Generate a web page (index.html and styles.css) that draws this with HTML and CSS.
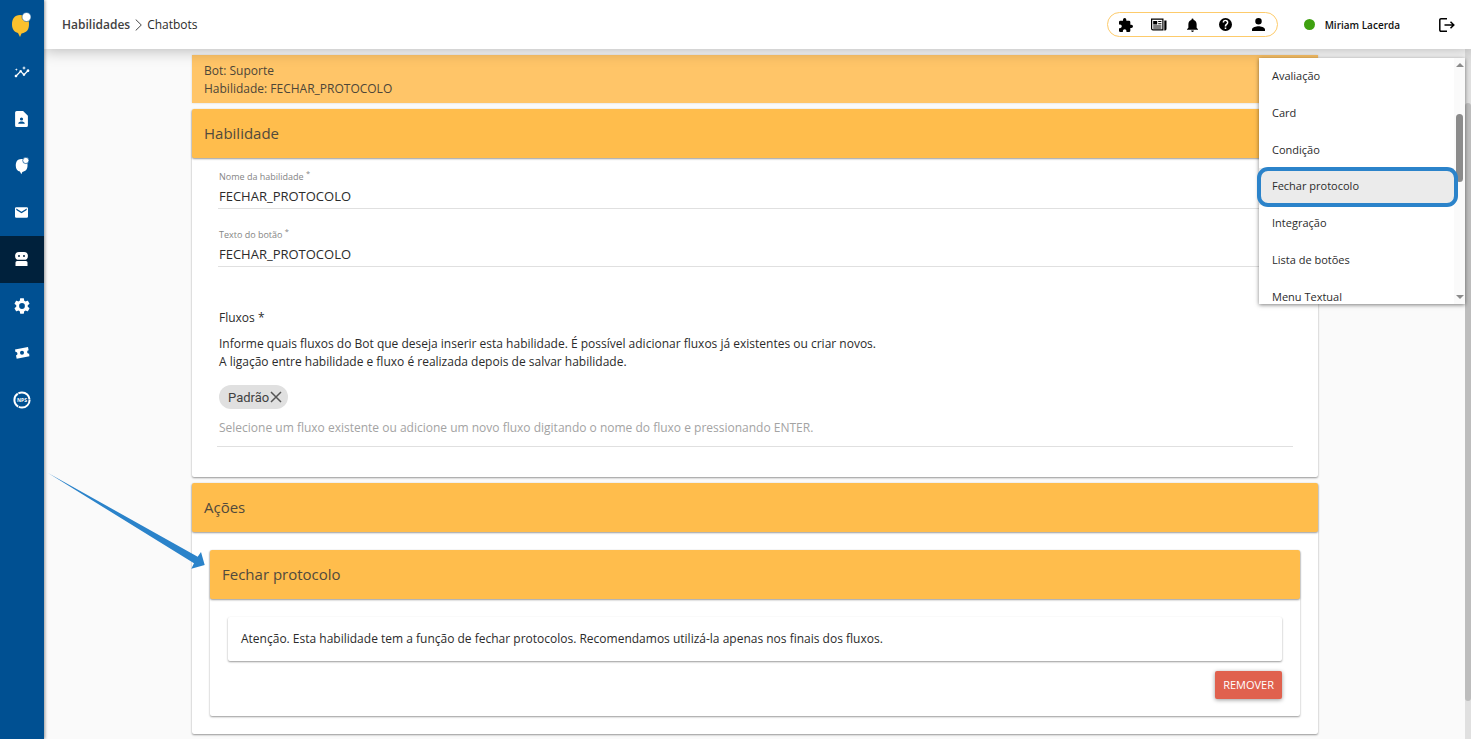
FILE: index.html
```html
<!DOCTYPE html>
<html lang="pt-BR">
<head>
<meta charset="utf-8">
<title>Habilidades - Chatbots</title>
<link rel="stylesheet" href="styles.css">
</head>
<body>
<div class="app">
  <aside class="sidebar">
    <a class="logo" href="#" aria-label="Início">
      <svg width="20" height="26" viewBox="0 0 20 26"><path d="M9 3C3.500 3 1 7 1 12.500c0 5 2.500 7.500 6 8.500l2 4 1.500-3.500C16 20.500 18 17.500 18 12 18 6 15 3 9 3z" fill="#fbc02d"/><circle cx="15.500" cy="5" r="4.500" fill="#fff" stroke="#005092" stroke-width=".6"/></svg>
    </a>
    <nav class="side-nav">
      <a href="#" aria-label="Métricas"><svg viewBox="0 0 24 24" width="16" height="16"><path d="M21 8c-1.450 0-2.260 1.440-1.930 2.510l-3.550 3.560c-.3-.09-.74-.09-1.040 0l-2.550-2.550C12.270 10.450 11.460 9 10 9c-1.450 0-2.270 1.440-1.930 2.520l-4.560 4.550C2.440 15.740 1 16.550 1 18c0 1.100.9 2 2 2 1.450 0 2.260-1.440 1.930-2.510l4.550-4.560c.3.090.74.090 1.040 0l2.550 2.550C12.730 16.550 13.540 18 15 18c1.450 0 2.270-1.440 1.930-2.520l3.560-3.550C21.560 12.260 23 11.450 23 10c0-1.100-.9-2-2-2zM15 9l.94-2.070L18 6l-2.060-.93L15 3l-.92 2.070L12 6l2.080.93zM3.500 11L4 9l2-.5L4 8l-.5-2L3 8l-2 .5L3 9z"/></svg></a>
      <a href="#" aria-label="Contatos"><svg viewBox="4 2 16 20" width="13" height="16"><path d="M14 2H6a2 2 0 0 0-2 2v16a2 2 0 0 0 2 2h12a2 2 0 0 0 2-2V8zM12 10a2 2 0 1 1 0 4 2 2 0 0 1 0-4zm4 8H8v-.6c0-1.600 2.600-2.400 4-2.400s4 .8 4 2.400z"/></svg></a>
      <a href="#" aria-label="Atendimento"><svg viewBox="0 0 20 26" width="14" height="18"><path d="M9 3C3.500 3 1 7 1 12.500c0 5 2.500 7.500 6 8.500l2 4 1.500-3.500C16 20.500 18 17.500 18 12 18 6 15 3 9 3z"/><circle cx="15.500" cy="5" r="4.500" stroke="#005092"/></svg></a>
      <a href="#" aria-label="Mensagens"><svg viewBox="2 4 20 16" width="13" height="11"><path d="M20 4H4a2 2 0 0 0-2 2v12a2 2 0 0 0 2 2h16a2 2 0 0 0 2-2V6a2 2 0 0 0-2-2zm0 4l-8 5-8-5V6l8 5 8-5z"/></svg></a>
      <a class="active" href="#" aria-label="Chatbots"><svg viewBox="0 0 13 14" width="13" height="14"><path fill-rule="evenodd" d="M4 0h5a3.700 3.700 0 0 1 0 7.800H4A3.700 3.700 0 0 1 4 0zM4 3a1 1 0 1 0 0 2 1 1 0 0 0 0-2zm5 0a1 1 0 1 0 0 2 1 1 0 0 0 0-2zM2 9h9a1.500 1.500 0 0 1 1.500 1.500V14H.5v-3.500A1.500 1.500 0 0 1 2 9z"/></svg></a>
      <a href="#" aria-label="Configurações"><svg viewBox="2 2 20 20" width="16" height="16"><path d="M19.140 12.940c.04-.3.060-.61.060-.94 0-.32-.02-.64-.07-.94l2.030-1.580c.18-.14.230-.41.120-.61l-1.920-3.320c-.12-.22-.37-.29-.59-.22l-2.390.96c-.5-.38-1.030-.7-1.620-.94l-.36-2.540c-.04-.24-.24-.41-.48-.41h-3.840c-.24 0-.43.17-.47.41l-.36 2.540c-.59.240-1.130.570-1.620.94l-2.390-.96c-.22-.08-.47 0-.59.220L2.740 8.870c-.12.210-.08.470.120.610l2.030 1.580c-.05.3-.09.630-.09.94s.02.640.070.940l-2.030 1.580c-.18.140-.23.410-.12.610l1.920 3.320c.12.220.370.290.590.220l2.390-.96c.5.380 1.030.7 1.620.94l.36 2.540c.05.240.240.410.480.410h3.840c.24 0 .44-.17.470-.41l.36-2.540c.59-.24 1.130-.56 1.620-.94l2.390.96c.22.080.470 0 .59-.22l1.920-3.320c.12-.22.070-.47-.12-.61zM12 15.600A3.600 3.600 0 1 1 12 8.400a3.600 3.600 0 0 1 0 7.200z"/></svg></a>
      <a href="#" aria-label="Campanhas"><svg viewBox="0 0 16 14" width="16" height="14"><path fill-rule="evenodd" d="M1 3.500L14 1l.6 3.200a1.700 1.700 0 0 0 .5 3.400l.3 2.700L2.700 12.700 2 9.400A1.700 1.700 0 0 0 1.500 6zM8 4.800a2 2 0 1 0 0 4 2 2 0 0 0 0-4z"/></svg></a>
      <a href="#" aria-label="NPS"><svg viewBox="0 0 18 18" width="18" height="18"><circle cx="9" cy="9" r="7.600" fill="none" stroke="#fff" stroke-width="2" stroke-dasharray="15.200 .7"/><text class="nps" x="9" y="11" text-anchor="middle">NPS</text></svg></a>
    </nav>
  </aside>

  <header class="topbar">
    <nav class="crumbs" aria-label="Navegação">
      <a class="crumb-root" href="#">Habilidades</a>
      <svg width="7" height="12" viewBox="0 0 7 12"><path d="M.7.500L6.300 6 .7 11.500" fill="none" stroke="#444"/></svg>
      <a href="#">Chatbots</a>
    </nav>
    <div class="tools">
      <button aria-label="Extensões"><svg viewBox="2 1 21 21" width="14" height="14"><path d="M20.500 11H19V7a2 2 0 0 0-2-2h-4V3.500a2.500 2.500 0 0 0-5 0V5H4a2 2 0 0 0-2 2v3.800h1.500a2.700 2.700 0 0 1 0 5.400H2V20a2 2 0 0 0 2 2h3.800v-1.500a2.700 2.700 0 0 1 5.400 0V22H17a2 2 0 0 0 2-2v-4h1.500a2.500 2.500 0 0 0 0-5z"/></svg></button>
      <button aria-label="Notícias"><svg viewBox="0 0 16 13" width="16" height="13"><path fill-rule="evenodd" d="M0 .5h12.500V12.500H2A2 2 0 0 1 0 10.500zM1.200 1.700v8.800a.8.800 0 0 0 .8.800h9.300V1.700z"/><path d="M2.200 3h4v3.500h-4zM7.200 3h3.200v1H7.200zM7.200 5.300h3.200v1H7.200zM2.200 7.500h8.200v1H2.200zM2.200 9.400h8.200v1H2.200zM13.300 2.500h2.200v8.300a1.700 1.700 0 0 1-2.200 1.600z"/></svg></button>
      <button aria-label="Notificações"><svg viewBox="4 2 16 20" width="11" height="14"><path d="M12 22a2 2 0 0 0 2-2h-4a2 2 0 0 0 2 2zm6-6v-5c0-3.070-1.640-5.640-4.500-6.320V4a1.500 1.500 0 0 0-3 0v.68C7.630 5.360 6 7.920 6 11v5l-2 2v1h16v-1z"/></svg></button>
      <button aria-label="Ajuda"><svg viewBox="2 2 20 20" width="13" height="13"><path d="M12 2a10 10 0 1 0 0 20 10 10 0 0 0 0-20zm1.200 17h-2.400v-2.400h2.400zm2.400-7.900l-1 1.100c-.9.900-1.400 1.500-1.400 3h-2.400v-.6c0-1.100.5-2.100 1.200-2.900l1.400-1.400a2 2 0 1 0-3.400-1.400H7.600a4.400 4.400 0 0 1 8.800 0c0 .9-.3 1.600-.8 2.200z"/></svg></button>
      <button aria-label="Perfil"><svg viewBox="4 4 16 16" width="13" height="13"><path d="M12 12a4 4 0 1 0 0-8 4 4 0 0 0 0 8zm0 2c-2.670 0-8 1.340-8 4v2h16v-2c0-2.660-5.330-4-8-4z"/></svg></button>
    </div>
    <div class="user"><span class="status"></span><span>Miriam Lacerda</span></div>
    <button class="logout" aria-label="Sair"><svg viewBox="0 0 16 14" width="16" height="14"><path d="M8 .8H2A1.200 1.200 0 0 0 .8 2v10A1.200 1.200 0 0 0 2 13.200h6M5.500 7h9M11.500 3.800L14.800 7l-3.300 3.200" fill="none" stroke="#000" stroke-width="1.500"/></svg></button>
  </header>

  <main class="content">
    <section class="banner">
      <p>Bot: Suporte</p>
      <p>Habilidade: FECHAR_PROTOCOLO</p>
    </section>

    <section class="card">
      <h2 class="card-title">Habilidade</h2>
      <form class="form">
        <div class="field">
          <label for="nome">Nome da habilidade <sup>*</sup></label>
          <input id="nome" type="text" value="FECHAR_PROTOCOLO">
        </div>
        <div class="field">
          <label for="botao">Texto do botão <sup>*</sup></label>
          <input id="botao" type="text" value="FECHAR_PROTOCOLO">
        </div>
        <div class="flows">
          <label class="flows-label" for="fluxo">Fluxos *</label>
          <p>Informe quais fluxos do Bot que deseja inserir esta habilidade. É possível adicionar fluxos já existentes ou criar novos.<br>A ligação entre habilidade e fluxo é realizada depois de salvar habilidade.</p>
          <div class="chip">Padrão<button type="button" aria-label="Remover Padrão"><svg viewBox="0 0 12 12" width="12" height="12"><path d="M1 1l10 10M11 1L1 11" stroke="#555" stroke-width="1.500"/></svg></button></div>
          <input id="fluxo" class="flow-input" type="text" placeholder="Selecione um fluxo existente ou adicione um novo fluxo digitando o nome do fluxo e pressionando ENTER.">
        </div>
      </form>
    </section>

    <section class="card">
      <h2 class="card-title">Ações</h2>
      <div class="card-body">
        <article class="card inner">
          <h3 class="card-title">Fechar protocolo</h3>
          <div class="card-body action">
            <p class="notice">Atenção. Esta habilidade tem a função de fechar protocolos. Recomendamos utilizá-la apenas nos finais dos fluxos.</p>
            <button class="remove">REMOVER</button>
          </div>
        </article>
      </div>
    </section>
  </main>
  <div class="page-scroll"><span></span></div>

  <div class="menu">
    <div class="menu-list" role="listbox" aria-label="Ações">
      <button role="option">Avaliação</button>
      <button role="option">Card</button>
      <button role="option">Condição</button>
      <button role="option" class="selected" aria-selected="true">Fechar protocolo</button>
      <button role="option">Integração</button>
      <button role="option">Lista de botões</button>
      <button role="option">Menu Textual</button>
    </div>
    <div class="menu-scroll"><i class="up"></i><span></span><i class="down"></i></div>
  </div>
  <div class="ring"></div>
  <svg class="arrow" viewBox="0 0 160 98" width="160" height="98"><path d="M0 0L149.700 83.700 153 79l3.700 13-13.400 3.700 2.700-5.400z" fill="#2b83ca"/></svg>
</div>
</body>
</html>
```
FILE: styles.css
```css
* { box-sizing: border-box; }
body {
  margin: 0;
  background: #fafafa;
  color: #2b2b2b;
  font: 12px/18px "Open Sans", "Noto Sans", sans-serif;
}
h2, h3, p { margin: 0; font-weight: 400; }
a { color: inherit; text-decoration: none; }
button, input { font: inherit; color: inherit; border: 0; background: none; padding: 0; }
svg { display: block; }

.app {
  position: relative;
  display: grid;
  grid-template: 49px 1fr / 44px 1fr 6px;
  height: 100vh;
  overflow: hidden;
}

.sidebar {
  grid-row: 1 / 3;
  z-index: 3;
  padding-right: 1px;
  background: #005092;
  box-shadow: 1px 0 3px rgba(0, 0, 0, .4);
}
.logo { display: grid; place-items: center; height: 49px; padding-right: 1px; }
.side-nav { display: grid; grid-auto-rows: 1fr; height: 374px; }
.side-nav a { display: grid; place-items: center; fill: #fff; }
.side-nav .active { margin-right: -1px; padding-right: 1px; background: #00213c; }
.nps { font: 700 5px "Open Sans", sans-serif; }

.topbar {
  grid-column: 2 / 4;
  z-index: 2;
  display: flex;
  align-items: center;
  padding: 0 16px 0 18px;
  background: #fff;
  box-shadow: 0 2px 14px rgba(0, 0, 0, .25);
}
.crumbs { display: flex; align-items: center; gap: 5px; margin-right: auto; }
.crumb-root { font-weight: 600; color: #424242; }
.tools {
  display: flex;
  width: 171px;
  height: 25px;
  padding: 0 2px;
  border: 1px solid #fdcb6b;
  border-radius: 13px;
}
.tools button { flex: 1; display: grid; place-items: center; color: #000; }
.user { display: flex; align-items: center; gap: 10px; margin: 0 39px 0 26px; font-size: 10px; font-weight: 600; color: #111; }
.status { width: 11px; height: 11px; border-radius: 50%; background: #3fa110; }

.content {
  display: flex;
  flex-direction: column;
  gap: 6px;
  padding: 6px 147px 4px 148px;
}
.banner {
  padding: 7px 12px 5px;
  background: #ffc568;
  color: #4d4638;
  box-shadow: 0 0 2px rgba(0, 0, 0, .15);
}
.card {
  border-radius: 2px;
  background: #fff;
  box-shadow: 0 1px 2px rgba(0, 0, 0, .4);
}
.card-title {
  height: 49px;
  padding: 0 12px;
  border-radius: 2px;
  background: #ffbd4c;
  box-shadow: 0 1px 2px rgba(0, 0, 0, .4);
  color: #514a3d;
  font-size: 15px;
  line-height: 48px;
}
.card-body { padding: 18px; }

.form { padding: 10px 25px 30px; }
.field { display: flex; flex-direction: column; margin: 0 0 17px 1px; border-bottom: 1px solid #e0e0e0; }
.field label { height: 18px; padding-left: 1px; color: #858585; font-size: 9px; }
.field sup { line-height: 0; }
.field input { height: 22px; padding: 0 1px 2px; font-size: 13px; }
.flows { display: flex; flex-direction: column; align-items: flex-start; padding-top: 25px; }
.flows-label, .flows p { margin: 0 0 8px 2px; }
.flows .chip { margin: 6px 0 7px 2px; }
.chip {
  display: flex;
  align-items: center;
  gap: 1px;
  height: 24px;
  padding: 0 6px 0 9px;
  border-radius: 12px;
  background: #e0e0e0;
  color: #424242;
  font: 13px "Roboto", sans-serif;
}
.flow-input { width: 100%; height: 31px; padding: 0 2px 8px; border-bottom: 1px solid #e0e0e0; }
.flow-input::placeholder { color: #a3a3a3; opacity: 1; }

.action { display: flex; flex-direction: column; align-items: flex-end; gap: 10px; padding-bottom: 17px; }
.notice {
  width: 100%;
  padding: 13px;
  border-radius: 2px;
  box-shadow: 0 1px 2px rgba(0, 0, 0, .4);
}
.remove {
  height: 28px;
  padding: 0 8px;
  border-radius: 2px;
  background: #e0614e;
  box-shadow: 0 1px 4px rgba(0, 0, 0, .4);
  color: #fff;
  font-size: 11px;
}

.page-scroll { padding-top: 54px; background: #e0e0e0; }
.page-scroll span { display: block; height: 94%; border-radius: 3px; background: #bdbdbd; }

.menu {
  position: absolute;
  z-index: 4;
  top: 58px;
  right: 6px;
  display: flex;
  width: 206px;
  height: 246px;
  overflow: hidden;
  background: #fff;
  box-shadow: 0 1px 4px rgba(0, 0, 0, .5);
}
.menu-list { flex: 1; display: grid; grid-auto-rows: 1fr; height: 257px; }
.menu-list button { padding: 0 13px; text-align: left; font-size: 11px; }
.menu-list .selected { background: #ebebeb; }
.menu-scroll { display: flex; flex-direction: column; align-items: center; width: 11px; padding: 5px 0; background: #fafafa; }
.menu-scroll span { width: 7px; height: 68px; margin: 47px 0 auto; border-radius: 4px; background: #8b8b8b; }
.up, .down { border: 4px solid transparent; }
.up { border-top: 0; border-bottom-color: #8b8b8b; }
.down { border-bottom: 0; border-top-color: #8b8b8b; }

.ring {
  position: absolute;
  z-index: 5;
  top: 167px;
  right: 13px;
  width: 201px;
  height: 40px;
  border: 4px solid #2b83ca;
  border-radius: 11px;
}
.arrow { position: absolute; z-index: 5; top: 473px; left: 48px; }
```
